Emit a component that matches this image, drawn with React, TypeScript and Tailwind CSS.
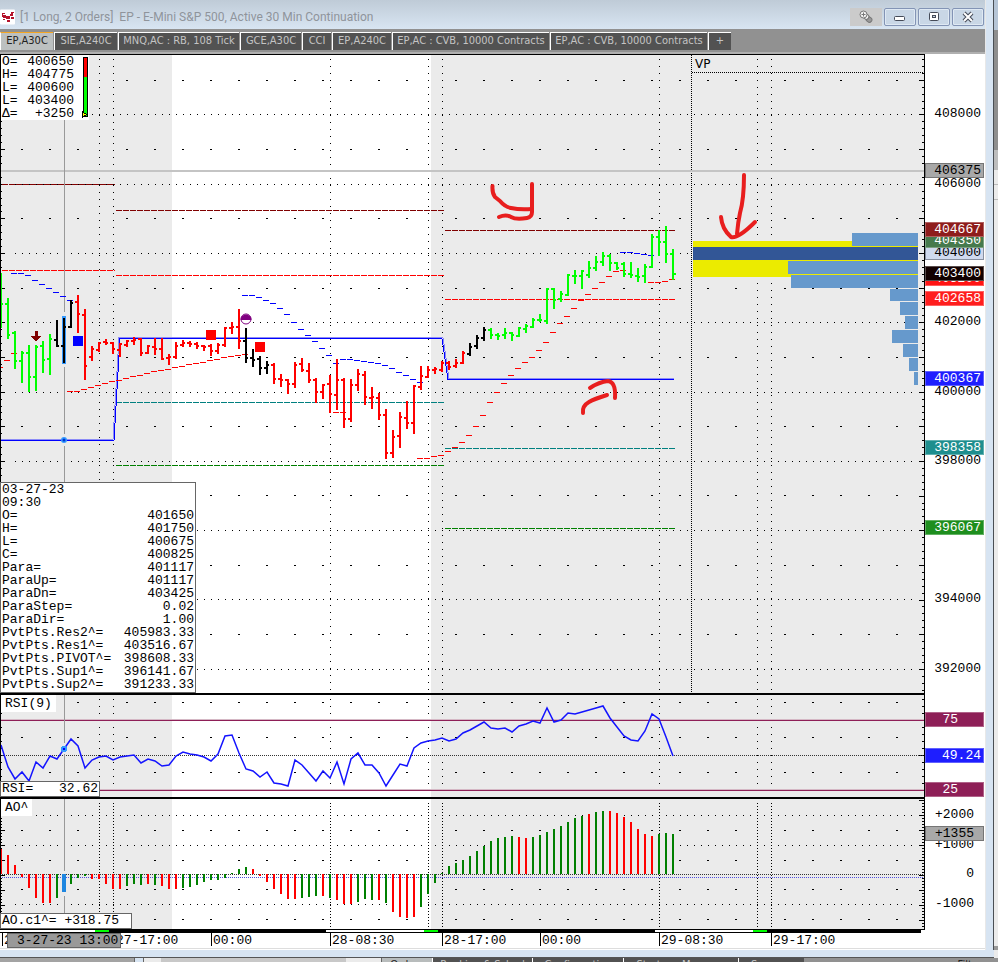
type Tone = "g" | "r" | "k";
// [tone, high, low, open, close]
type Bar = [Tone, number, number, number, number];

const TONES: Record<Tone, string> = { g: "#00ff00", r: "#ff0000", k: "#000000" };
const MONO = "'Liberation Mono', monospace";

const bars: Bar[] = [
  ["g", 273, 328, 290, 304], ["g", 298, 339, 304, 335], ["g", 331, 369, 333, 361], ["g", 351, 383, 361, 353],
  ["g", 345, 392, 353, 377], ["g", 345, 391, 377, 347], ["g", 341, 373, 346, 360], ["g", 334, 375, 359, 339],
  ["k", 320, 347, 340, 346], ["k", 318, 363, 346, 327], ["k", 300, 328, 327, 303], ["r", 295, 333, 302, 314],
  ["r", 309, 380, 315, 366], ["r", 346, 361, 357, 349], ["r", 342, 352, 350, 343], ["r", 339, 345, 342, 343],
  ["r", 342, 354, 343, 349], ["r", 343, 357, 350, 344], ["r", 340, 347, 345, 341], ["r", 337, 345, 341, 340],
  ["r", 338, 356, 339, 353], ["r", 345, 354, 353, 346], ["r", 338, 355, 347, 349], ["r", 338, 360, 349, 359],
  ["r", 354, 365, 358, 357], ["r", 342, 359, 357, 346], ["r", 340, 347, 345, 343], ["r", 341, 347, 343, 344],
  ["r", 342, 349, 344, 346], ["r", 345, 351, 346, 347], ["r", 344, 356, 346, 351], ["r", 343, 354, 351, 345],
  ["r", 327, 347, 345, 328], ["r", 322, 334, 328, 327], ["r", 309, 349, 327, 341], ["k", 328, 363, 341, 358],
  ["k", 349, 367, 358, 360], ["k", 356, 375, 359, 368], ["k", 361, 374, 368, 365], ["r", 363, 384, 365, 379],
  ["r", 374, 387, 379, 380], ["r", 379, 394, 380, 384], ["r", 362, 388, 384, 365], ["r", 358, 372, 364, 370],
  ["r", 363, 383, 371, 380], ["r", 378, 403, 380, 392], ["r", 384, 399, 392, 385], ["r", 375, 413, 384, 394],
  ["r", 359, 410, 395, 380], ["r", 378, 428, 380, 419], ["r", 379, 422, 419, 385], ["r", 369, 391, 385, 374],
  ["r", 371, 405, 375, 397], ["r", 387, 409, 398, 397], ["r", 393, 420, 398, 415], ["r", 409, 459, 415, 453],
  ["r", 430, 458, 453, 437], ["r", 412, 448, 436, 417], ["r", 401, 429, 418, 423], ["r", 385, 434, 423, 386],
  ["r", 366, 390, 387, 376], ["r", 366, 378, 377, 370], ["r", 367, 374, 370, 369], ["r", 361, 372, 370, 363],
  ["r", 361, 370, 363, 367], ["r", 359, 368, 366, 363], ["r", 351, 364, 363, 353], ["k", 343, 356, 354, 347],
  ["k", 335, 349, 346, 338], ["k", 327, 341, 338, 330], ["g", 328, 339, 330, 335], ["g", 333, 340, 335, 336],
  ["g", 328, 339, 335, 333], ["g", 332, 341, 333, 335], ["g", 327, 337, 336, 328], ["g", 324, 333, 329, 326],
  ["g", 318, 328, 327, 320], ["g", 314, 322, 320, 320], ["g", 288, 324, 321, 289], ["g", 288, 309, 289, 300],
  ["g", 291, 302, 299, 294], ["g", 274, 296, 295, 275], ["g", 270, 284, 276, 276], ["g", 270, 289, 276, 271],
  ["g", 261, 278, 275, 268], ["g", 256, 271, 268, 262], ["g", 252, 266, 262, 256], ["g", 254, 271, 256, 263],
  ["g", 262, 270, 263, 268], ["g", 262, 277, 264, 274], ["g", 262, 278, 274, 275], ["g", 268, 282, 276, 277],
  ["g", 264, 283, 276, 267], ["g", 234, 268, 267, 237], ["g", 230, 256, 237, 242], ["g", 226, 263, 242, 254],
  ["g", 249, 280, 254, 274],
];

const rsi = [
  745, 767, 779, 772, 781, 762, 768, 756, 759, 749, 739, 746, 768, 760, 757, 756, 760, 757, 756, 755, 763, 759, 761,
  766, 765, 756, 752, 754, 755, 757, 761, 754, 736, 735, 753, 769, 771, 777, 772, 783, 784, 786, 760, 765, 773, 781,
  771, 778, 762, 784, 759, 753, 765, 765, 773, 786, 775, 764, 766, 748, 743, 741, 740, 738, 741, 739, 733, 730, 726,
  722, 728, 729, 728, 732, 726, 724, 721, 723, 708, 722, 720, 713, 714, 712, 710, 708, 706, 718, 727, 736, 740, 741,
  731, 714, 719, 737, 756,
];

const ao = [
  849, 855, 865, 877, 888, 898, 903, 903, 898, 892, 884, 878, 876, 879, 879, 884, 889, 889, 886, 884, 885, 884, 885,
  886, 889, 889, 888, 887, 885, 882, 880, 880, 878, 873, 869, 867, 869, 876, 882, 889, 894, 899, 899, 898, 897, 896,
  896, 898, 900, 904, 904, 902, 899, 900, 900, 903, 912, 917, 918, 917, 907, 894, 883, 873, 866, 863, 860, 856, 851,
  846, 841, 838, 837, 836, 837, 838, 837, 835, 832, 829, 826, 822, 818, 816, 814, 812, 811, 811, 813, 817, 822, 829,
  834, 836, 834, 833, 834,
];
const aoTones =
  "rrrrrrrrggggg" + "rrrrrggg" + "rgrrrgggggggggg" + "rrrrrrrggg" + "rgrrrgggrgrrrrgggggggggggg" + "ggrrggggggggrggrrrrrrrggg";

// parabolic stops, one dash per bar, starting at x
const stops: { color: string; x: number; ys: number[] }[] = [
  { color: "#0000ff", x: 11, ys: [273, 273, 275, 280, 284, 288, 292, 296, 300] },
  {
    color: "#0000ff",
    x: 242,
    ys: [295, 295, 297, 300, 303, 308, 314, 322, 329, 335, 341, 348, 355, 363, 359, 359, 360, 361, 362, 363, 365, 368, 372, 375, 379, 382],
  },
  { color: "#0000ff", x: 620, ys: [252, 252, 253, 254, 255] },
  { color: "#ff0000", x: -3, ys: [367, 360, 353] },
  {
    color: "#ff0000",
    x: 67,
    ys: [391, 391, 389, 387, 385, 383, 381, 380, 378, 376, 375, 373, 371, 370, 369, 367, 366, 364, 363, 362, 360, 359, 357, 356, 355, 354],
  },
  { color: "#ff0000", x: 333, ys: [412, 412] },
  {
    color: "#ff0000",
    x: 417,
    ys: [458, 458, 456, 455, 451, 447, 442, 435, 426, 415, 402, 392, 383, 375, 368, 362, 357, 350, 342, 332, 323, 316, 308, 300, 294, 288, 282, 276, 271, 270],
  },
  { color: "#ff0000", x: 648, ys: [282, 282, 281, 279] },
];

const pivots: [number, number, number, string][] = [
  [2, 115, 184, "#800000"], [2, 115, 270, "#ff0000"],
  [116, 444, 210, "#800000"], [116, 444, 275, "#ff0000"], [116, 444, 402, "#008080"], [116, 444, 465, "#008000"],
  [445, 675, 230, "#800000"], [445, 675, 299, "#ff0000"], [445, 675, 448, "#008080"], [445, 675, 528, "#008000"],
];

// volume profile rows: [left, top, height, color]
const profile: [number, number, number, string][] = [
  [852, 233, 13, "#6699cc"], [693, 247, 13, "#325696"], [788, 261, 13, "#6699cc"], [791, 275, 13, "#6699cc"],
  [890, 289, 12, "#6699cc"], [900, 302, 13, "#6699cc"], [905, 316, 13, "#6699cc"], [892, 330, 13, "#6699cc"],
  [903, 344, 13, "#6699cc"], [909, 358, 13, "#6699cc"], [914, 372, 13, "#6699cc"],
];

const sessionColumns = [99, 113, 330, 428, 442, 659, 757, 771];
const dashColumns = [
  22, 50, 78, 127, 155, 183, 211, 239, 267, 295, 323, 351, 379, 407, 456, 484, 512, 540, 568, 596, 624, 652, 680,
  708, 736, 785, 813, 841, 869, 897,
];

const priceLabels: [string, number][] = [
  ["408000", 114], ["406000", 184], ["404000", 253], ["402000", 322], ["400000", 392], ["398000", 461],
  ["394000", 599], ["392000", 669],
];

const tabs = [
  { label: "EP,A30C", width: "w-[53px]" },
  { label: "SIE,A240C", width: "w-[63px]" },
  { label: "MNQ,AC : RB, 108 Tick", width: "w-[121px]" },
  { label: "GCE,A30C", width: "w-[61px]" },
  { label: "CCI", width: "w-[29px]" },
  { label: "EP,A240C", width: "w-[59px]" },
  { label: "EP,AC : CVB, 10000 Contracts", width: "w-[157px]" },
  { label: "EP,AC : CVB, 10000 Contracts", width: "w-[157px]" },
  { label: "+", width: "w-[23px]" },
];

const quote = [
  ["O=", "400650"], ["H=", "404775"], ["L=", "400600"], ["L=", "403400"], ["Δ=", "+3250"],
];

const cursorValues = [
  ["O=", "401650"], ["H=", "401750"], ["L=", "400675"], ["C=", "400825"], ["Para=", "401117"], ["ParaUp=", "401117"],
  ["ParaDn=", "403425"], ["ParaStep=", "0.02"], ["ParaDir=", "1.00"], ["PvtPts.Res2^=", "405983.33"],
  ["PvtPts.Res1^=", "403516.67"], ["PvtPts.PIVOT^=", "398608.33"], ["PvtPts.Sup1^=", "396141.67"],
  ["PvtPts.Sup2^=", "391233.33"],
];

function barX(i: number) {
  return 1 + i * 7;
}

function Shade({ top, bottom }: { top: number; bottom: number }) {
  return (
    <>
      <rect x="0" y={top} width="985" height={bottom - top} fill="#fff" />
      <rect x="0" y={top} width="172" height={bottom - top} fill="#ebebeb" />
      <rect x="431" y={top} width="493" height={bottom - top} fill="#ebebeb" />
    </>
  );
}

function Columns({ top, bottom, gap }: { top: number; bottom: number; gap: number }) {
  return (
    <>
      {sessionColumns.map((x) => (
        <path key={x} d={`M${x + 0.5} ${top}V${bottom}`} stroke="#000" strokeDasharray={`1 ${gap}`} />
      ))}
    </>
  );
}

function DotRow({ y }: { y: number }) {
  return <path d={`M15 ${y + 0.5}H917`} stroke="#000" strokeDasharray="1 6" />;
}

function DashRow({ y }: { y: number }) {
  return <path d={dashColumns.map((x) => `M${x - 1} ${y + 0.5}h2`).join("")} stroke="#000" />;
}

// ruler marks on both edges of the plot, every nth one long
function Ticks({ from, to, step, every, first }: { from: number; to: number; step: number; every: number; first: number }) {
  const marks: string[] = [];
  const count = Math.floor((to - from) / step);
  for (let i = 0; i <= count; i++) {
    const y = Math.round(from + i * step) + 0.5;
    const len = i % every === first ? 5 : 2;
    marks.push(`M0 ${y}h${len}M924 ${y}h${-len}`);
  }
  return <path d={marks.join("")} stroke="#000" />;
}

function AxisLabel({ text, y, x = 981, fill = "#000" }: { text: string; y: number; x?: number; fill?: string }) {
  return (
    <text x={x} y={y + 3} textAnchor="end" fontSize="13" fontFamily={MONO} fill={fill}>
      {text}
    </text>
  );
}

function Tag({ text, top, bg, fill = "#fff", edge = "#fff", x }: { text: string; top: number; bg: string; fill?: string; edge?: string; x?: number }) {
  return (
    <g>
      <rect x="925" y={top} width="59" height="15" fill={bg} />
      <rect x="925.5" y={top + 0.5} width="58" height="14" fill="none" stroke={edge} strokeOpacity="0.3" />
      <AxisLabel text={text} y={top + 8} x={x} fill={fill} />
    </g>
  );
}

function PricePanel() {
  return (
    <svg viewBox="0 54 985 641" className="block h-auto w-full" shapeRendering="crispEdges" fill="none" role="img" aria-label="Price">
      <Shade top={54} bottom={695} />
      <Columns top={59} bottom={692} gap={6} />
      {[114, 184, 253, 322, 392, 461, 530, 599, 669].map((y) => (
        <DotRow key={y} y={y} />
      ))}
      {[80, 149, 218, 288, 357, 426, 495, 565, 634].map((y) => (
        <DashRow key={y} y={y} />
      ))}
      <Ticks from={59} to={692} step={6.93} every={5} first={3} />
      <path d="M691.5 55V692" stroke="#000" strokeDasharray="1 1" />
      <path d="M692 72.5H923" stroke="#000" strokeDasharray="1 1" />
      <text x="695" y="68" fontSize="12" fontFamily="'DejaVu Sans', sans-serif" fill="#000">VP</text>

      {/* crosshair */}
      <path d="M0 171H924" stroke="#c4c4c4" strokeWidth="2" />
      <path d="M64.5 120V312M64.5 367V434M64.5 446V484" stroke="#999" />

      {/* volume profile */}
      <rect x="693" y="241" width="225" height="36" fill="#ebeb00" />
      {profile.map(([x, y, h, color]) => (
        <rect key={y} x={x} y={y} width={918 - x} height={h} fill={color} />
      ))}

      {pivots.map(([x1, x2, y, color]) => (
        <path key={`${x1}-${y}`} d={`M${x1} ${y + 0.5}H${x2}`} stroke={color} strokeDasharray="6 1" />
      ))}
      <path d="M1 439.5H113L119 337.5H443L449 378.5H674" stroke="#8c8cf6" />
      <path d="M1 440.5H114L120 338.5H442L448 379.5H674" stroke="#0000ff" />
      {stops.map((s) => (
        <path key={`${s.x}${s.color}`} d={s.ys.map((y, i) => `M${s.x + i * 7} ${y + 0.5}h6`).join("")} stroke={s.color} />
      ))}

      <rect x="62" y="316" width="4" height="48" fill="#3399ff" />
      {bars.map(([tone, high, low, open, close], i) => (
        <g key={i} fill={TONES[tone]}>
          <rect x={barX(i) - 1} y={high} width="2" height={low - high} />
          <rect x={barX(i) - 3} y={open - 1} width="2" height="2" />
          <rect x={barX(i) + 1} y={close - 1} width={i === bars.length - 1 ? 2 : 1} height="2" />
        </g>
      ))}

      {/* trade markers */}
      <rect x="73" y="336" width="10" height="10" fill="#0000ff" />
      <rect x="206" y="330" width="10" height="10" fill="#ff0000" />
      <rect x="255" y="342" width="10" height="10" fill="#ff0000" />
      <path d="M34.5 331h3v5h4l-5.500 5-5.500-5h4z" fill="#800000" />
      <g shapeRendering="geometricPrecision">
        <circle cx="246" cy="319" r="5" fill="#fff" stroke="#800080" />
        <path d="M240.500 320a5.500 5.500 0 0 1 11 0z" fill="#800080" />
        <circle cx="64" cy="440" r="3" fill="#3399ff" />
        <circle cx="64" cy="440" r="1.500" fill="#0033cc" />
        <g stroke="#e81e1e" strokeWidth="4" strokeLinecap="round" strokeLinejoin="round">
          <path d="M492.500 186Q492 193 495 197L500 201Q505 207 511 208Q520 210 532 209" />
          <path d="M532 184V212Q532 217 527 218Q516 220 511 217Q506 214 499 217" />
          <path d="M590 388Q599 382 608 381Q616 382 615 398" />
          <path d="M583 413Q582 406 589 402Q594 399 607 395" />
          <path d="M744 175Q744 199 740 213Q738 222 737 234" />
          <path d="M721 217Q722 229 731 237Q738 239 755 222" />
        </g>
      </g>

      <path d="M924.5 54V695M0.5 54V695" stroke="#000" />
      <path d="M0 54.5H924" stroke="#000" />
      <path d="M0 694H925" stroke="#000" strokeWidth="2" />

      {priceLabels.map(([text, y]) => (
        <AxisLabel key={text} text={text} y={y} />
      ))}
      <Tag text="406375" top={163} bg="#a8a8a8" fill="#000" edge="#000" />
      <rect x="925" y="245" width="59" height="15" fill="#d0daee" />
      <rect x="925.5" y="245.5" width="58" height="14" stroke="#8890a0" />
      <AxisLabel text="404000" y={253} />
      <Tag text="404350" top={233} bg="#467a4c" />
      <Tag text="404667" top={222} bg="#8e1c1c" />
      <Tag text="403200" top={271} bg="#ff1414" />
      <Tag text="403400" top={266} bg="#120000" />
      <Tag text="402658" top={291} bg="#ff1e1e" />
      <Tag text="400367" top={371} bg="#1e1eff" />
      <Tag text="398358" top={440} bg="#1e8e8e" />
      <Tag text="396067" top={520} bg="#1e8e1e" />
    </svg>
  );
}

function RsiPanel() {
  return (
    <svg viewBox="0 695 985 104" className="block h-auto w-full" shapeRendering="crispEdges" fill="none" role="img" aria-label="RSI">
      <Shade top={695} bottom={799} />
      <Columns top={699} bottom={786} gap={6} />
      {[702, 737, 772].map((y) => (
        <DashRow key={y} y={y} />
      ))}
      <Ticks from={699} to={794} step={7} every={20} first={8} />
      <path d="M0 755.5H924" stroke="#333" strokeDasharray="1 1" />
      <path d="M0 719.5H924M0 789.5H924" stroke="#d5b8c5" />
      <path d="M0 720.5H924M0 790.5H924" stroke="#8e1f57" />
      <path d="M64.5 695V743M64.5 754V782" stroke="#999" />
      <polyline
        points={rsi.map((y, i) => `${barX(i)},${y}`).join(" ")}
        stroke="#1414ff"
        strokeWidth="1.5"
        shapeRendering="geometricPrecision"
      />
      <circle cx="64" cy="749" r="3" fill="#3399ff" />
      <circle cx="64" cy="749" r="1" fill="#0000ff" />
      <path d="M924.5 695V799M0.5 695V799" stroke="#000" />
      <path d="M0 798H925" stroke="#000" strokeWidth="2" />
      <Tag text="75" top={712} bg="#8e1f57" x={958} />
      <Tag text="49.24" top={748} bg="#1e1eff" />
      <Tag text="25" top={782} bg="#8e1f57" x={958} />
    </svg>
  );
}

function AoPanel() {
  return (
    <svg viewBox="0 799 985 130" className="block h-auto w-full" shapeRendering="crispEdges" fill="none" role="img" aria-label="Awesome oscillator">
      <Shade top={799} bottom={929} />
      <Columns top={803} bottom={927} gap={2} />
      {[815, 845, 904].map((y) => (
        <DotRow key={y} y={y} />
      ))}
      {[830, 860, 889, 919].map((y) => (
        <DashRow key={y} y={y} />
      ))}
      <Ticks from={800} to={926} step={3} every={5} first={0} />
      <path d="M0 874.5H924" stroke="#333" strokeDasharray="1 1" />
      <path d="M0 877.5H924" stroke="#5050e0" strokeDasharray="1 1" />
      <path d="M64.5 799V871M64.5 896V914" stroke="#999" />
      {ao.map((y, i) => (
        <rect
          key={i}
          x={i === 9 ? 62 : barX(i) - 1}
          y={Math.min(y, 874)}
          width={i === 9 ? 4 : 2}
          height={Math.max(Math.abs(y - 874), 1)}
          fill={i === 9 ? "#1e86e0" : aoTones[i] === "r" ? "#ff0000" : "#008000"}
        />
      ))}
      <path d="M924.5 799V929M0.5 799V929" stroke="#000" />
      <AxisLabel text="+2000" y={815} x={974} />
      <AxisLabel text="+1000" y={845} x={974} />
      <AxisLabel text="0" y={874} x={974} />
      <AxisLabel text="-1000" y={904} x={974} />
      <Tag text="+1355" top={826} bg="#a8a8a8" fill="#000" edge="#000" x={974} />
    </svg>
  );
}

function TimeAxis() {
  const labels: [string, number][] = [
    ["27", 2], ["27-17:00", 114], ["00:00", 211], ["28-08:30", 330], ["28-17:00", 442], ["00:00", 540],
    ["29-08:30", 659], ["29-17:00", 771],
  ];
  return (
    <svg viewBox="0 929 985 21" className="block h-auto w-full" shapeRendering="crispEdges" fill="none" role="img" aria-label="Time">
      <rect x="0" y="929" width="985" height="21" fill="#fff" />
      <path d="M0 929.5H925M0 932.5H921" stroke="#000" />
      <path d="M109 931H326M438 931H655M767 931H921" stroke="#000" strokeWidth="2" />
      <path d="M95 931H109M424 931H438M753 931H767" stroke="#00ff00" strokeWidth="2" />
      {labels.map(([text, x]) => (
        <g key={x}>
          {x !== 114 && <path d={`M${x + 0.5} 932V946`} stroke="#000" />}
          <text x={x + 2} y="944" fontSize="13" fontFamily={MONO} fill="#000">{text}</text>
        </g>
      ))}
      <rect x="7.5" y="933.5" width="113" height="14" fill="#999" stroke="#666" />
      <text x="17" y="944" fontSize="13" fontFamily={MONO} fill="#000">3-27-23 13:00</text>
      <path d="M0 948.5H985" stroke="#ddd" />
    </svg>
  );
}

function TitleBar() {
  const control = "flex h-[18px] w-8 items-center justify-center rounded-[2px] border border-[#8394b5] bg-[#c9d7e6] shadow-[inset_0_0_0_1px_#dfe9f3]";
  return (
    <header className="flex h-[29px] items-center bg-gradient-to-b from-[#bfcbd7] to-[#d8e5f2] pt-[5px]">
      <svg viewBox="0 0 16 16" className="h-4 w-4 shrink-0" aria-hidden="true">
        <rect width="15" height="15" y="0.5" rx="1" fill="#fff" />
        <path d="M2 4h3v1H3v1h3v3H3V8H2zM6 7h4v3H6zM7 11h3v2H7zM11 3h3v1h-1v3h-3V5h1zM11 8h3v2h-3zM3 10h2v1H3z" fill="#b5122b" />
      </svg>
      <h1 className="ml-1 flex-1 truncate font-[Roboto,sans-serif] text-[12px] whitespace-pre text-[#8f949b]">
        {"[1 Long, 2 Orders]  EP - E-Mini S&P 500, Active 30 Min Continuation"}
      </h1>
      <div className="flex gap-[2px] pr-[1px]">
        <button aria-label="Link" className="flex h-[18px] w-8 items-center justify-center bg-[#cbcbcb]">
          <svg viewBox="0 0 14 14" className="h-[14px] w-[14px]" fill="#f2f2f2" stroke="#777">
            <rect x="7" y="7" width="6" height="5" rx="2.5" transform="rotate(40 10 9.500)" fill="#999" />
            <rect x="4" y="4" width="6" height="5" rx="2.500" transform="rotate(40 7 6.500)" />
            <circle cx="4.500" cy="4.500" r="3.500" />
            <path d="M4.500 2.500v4M2.500 4.500h4" />
          </svg>
        </button>
        <button aria-label="Minimize" className={control}>
          <svg viewBox="0 0 12 12" className="h-3 w-3"><rect x="0.5" y="5.5" width="10" height="4" rx="1" fill="#fff" stroke="#454b58" /></svg>
        </button>
        <button aria-label="Maximize" className={control}>
          <svg viewBox="0 0 12 12" className="h-3 w-3"><rect x="1.5" y="1.5" width="9" height="8" rx="1" fill="#fff" stroke="#454b58" /><rect x="4.5" y="4.5" width="3" height="2" fill="#c9d7e6" stroke="#454b58" /></svg>
        </button>
        <button aria-label="Close" className={control}>
          <svg viewBox="0 0 12 12" className="h-3 w-3"><path d="M2 2l8 8M10 2l-8 8" stroke="#454b58" strokeWidth="4" /><path d="M2 2l8 8M10 2l-8 8" stroke="#fff" strokeWidth="2" /></svg>
        </button>
      </div>
    </header>
  );
}

export default function App() {
  return (
    <div className="flex w-full flex-col overflow-hidden bg-[#ebebeb]">
      <div className="flex">
        <main className="min-w-0 flex-1">
          <TitleBar />
          <nav className="flex h-[25px] items-start gap-[1px] border-b-2 border-[#b0b0b0] bg-[#919191] pt-[3px] font-['DejaVu_Sans_Condensed','DejaVu_Sans',sans-serif] text-[11px]">
            {tabs.map((tab, i) => (
              <button
                key={i}
                className={`${tab.width} h-[18px] shrink-0 border-t border-l text-center whitespace-nowrap ${
                  i === 0 ? "border-t-[#f5a623] border-l-white bg-[#bcc0c0] text-[#222]" : "border-white bg-[#525252] text-[#c4c4c4]"
                }`}
              >
                {tab.label}
              </button>
            ))}
          </nav>

          <div className="font-['Liberation_Mono',monospace] text-[13px] leading-[13px] text-black">
            <section className="relative">
              <PricePanel />
              <div className="absolute top-[1px] left-[1px] flex w-[88px] justify-between bg-white">
                <dl className="w-[73px] pl-px">
                  {quote.map(([name, value], i) => (
                    <div key={i} className="flex justify-between">
                      <dt>{name}</dt>
                      <dd>{value}</dd>
                    </div>
                  ))}
                </dl>
                <svg viewBox="0 0 7 63" className="h-[63px] w-[7px]" shapeRendering="crispEdges" aria-hidden="true">
                  <rect x="1" y="2" width="5" height="60" fill="#000" />
                  <rect x="2" y="3" width="3" height="19" fill="#ff0000" />
                  <rect x="2" y="22" width="3" height="39" fill="#00ff00" />
                  <path d="M0.5 57l4 2.500-4 2.500z" fill="#ffff00" stroke="#000" />
                </svg>
              </div>
              <div className="absolute bottom-[2px] left-0 w-[196px] border border-[#666] bg-white px-px pb-px">
                <div>03-27-23</div>
                <div>09:30</div>
                <dl>
                  {cursorValues.map(([name, value]) => (
                    <div key={name} className="flex justify-between">
                      <dt>{name}</dt>
                      <dd>{value}</dd>
                    </div>
                  ))}
                </dl>
              </div>
            </section>
            <section className="relative">
              <RsiPanel />
              <h2 className="absolute top-0 left-[1px] bg-white px-1 py-[2px]">RSI(9)</h2>
              <div className="absolute bottom-[2px] left-0 flex w-[100px] justify-between border border-[#666] bg-white px-px pb-px">
                <span>RSI=</span>
                <span>32.62</span>
              </div>
            </section>
            <section className="relative">
              <AoPanel />
              <h2 className="absolute top-0 left-[1px] bg-white px-1 py-[2px]">AO^</h2>
              <div className="absolute bottom-0 left-0 w-[132px] border border-[#666] bg-white px-px pb-px">AO.c1^= +318.75</div>
            </section>
            <TimeAxis />
          </div>
        </main>

        {/* window frame and the strip of desktop behind it */}
        <div className="w-2 border-l border-[#e8e8e8] bg-[#d7e4f2]" />
        <div className="flex w-[5px] flex-col border-l border-[#4a4f55]">
          <div className="h-[30px] bg-[#b6c5d6]" />
          <div className="h-[120px] bg-[#8e8e8e]" />
          <div className="h-5 bg-[#bdbdbd]" />
          <div className="h-[15px] border-b border-[#bbb]" />
          <div className="h-[15px] border-b border-[#bbb]" />
          <div className="flex-1" />
          <div className="h-1 bg-[#999]" />
        </div>
      </div>

      <div className="mr-[4px] h-2 border-b border-[#555] bg-[#d7e4f2]" />
      <footer className="flex h-1 overflow-hidden bg-[#919191] font-['DejaVu_Sans_Condensed','DejaVu_Sans',sans-serif] text-[11px] leading-[14px] text-[#c4c4c4]">
        <div className="w-[134px] bg-[#a3a3a3]" />
        <div className="w-[10px] border-x border-[#666] bg-[#d7e4f2]" />
        <div className="w-[17px] bg-[#ebebeb]" />
        <div className="w-[185px] bg-[#c8c8c8]" />
        <div className="w-[36px] border-r border-[#666] bg-[#ebebeb]" />
        <div className="w-[50px] bg-[#b8bcbc] text-center text-[#222]">Orders</div>
        <div className="w-[100px] border-l border-white bg-[#525252] text-center">Ranking &amp; Sched</div>
        <div className="w-[91px] border-l border-white bg-[#525252] text-center">Configuration</div>
        <div className="w-[115px] border-l border-white bg-[#525252] text-center">Strategy Manager</div>
        <div className="w-[66px] border-l border-white bg-[#525252] pl-3">Scan</div>
        <div className="flex-1 pr-4 text-right text-[#222]">Filter</div>
      </footer>
    </div>
  );
}
